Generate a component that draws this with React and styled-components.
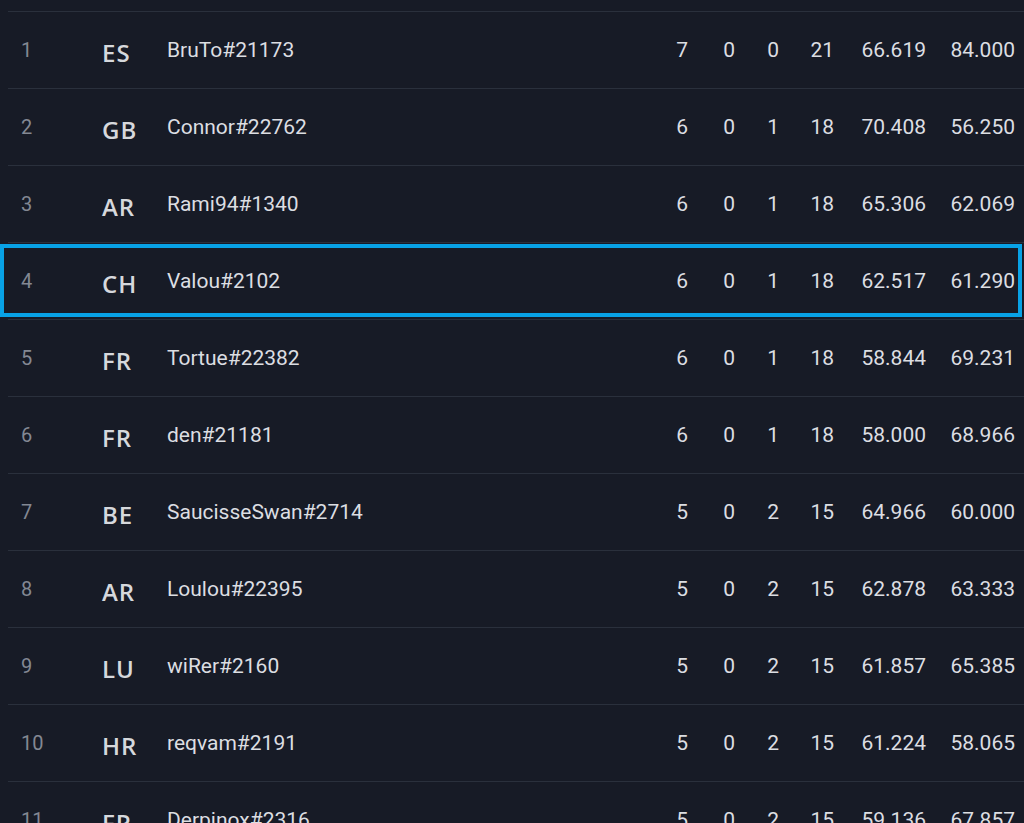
import React from "react";
import styled, { createGlobalStyle } from "styled-components";

const Global = createGlobalStyle`
  html, body { margin: 0; padding: 0; background: #171b26; }
  body { font-family: Roboto, "Liberation Sans", sans-serif; overflow: hidden; }
`;

const Page = styled.div`
  padding: 11px 0 0 8px;
  height: 823px;
  box-sizing: border-box;
  overflow: hidden;
`;

const Table = styled.div`
  display: flex;
  flex-direction: column;
`;

const Row = styled.div`
  position: relative;
  display: grid;
  grid-template-columns: 80px 79px 1fr 50px 47px 44px 55px 92px 89px;
  align-items: center;
  height: 76px;
  border-top: 1px solid #2a303c;
  padding-right: 9px;
  ${(p) =>
    p.$active &&
    `
    &::after {
      content: "";
      position: absolute;
      left: -8px;
      right: 2px;
      top: 1px;
      bottom: 2px;
      border: 4px solid #08a2e6;
      pointer-events: none;
    }
  `}
`;

const Rank = styled.div`
  padding-left: 13px;
  color: #838893;
  font-size: 20px;
`;

const Code = styled.div`
  padding-left: 14px;
  padding-top: 5px;
  font-family: "Open Sans", "Noto Sans", sans-serif;
  font-weight: 600;
  font-size: 24px;
  color: #d6d8dc;
  letter-spacing: 1px;
`;

const Name = styled.div`
  color: #dcdee2;
  font-size: 21px;
`;

const Num = styled.div`
  text-align: right;
  color: #dcdee2;
  font-size: 21px;
`;

const rows = [
  [1, "ES", "BruTo#21173", 7, 0, 0, 21, "66.619", "84.000"],
  [2, "GB", "Connor#22762", 6, 0, 1, 18, "70.408", "56.250"],
  [3, "AR", "Rami94#1340", 6, 0, 1, 18, "65.306", "62.069"],
  [4, "CH", "Valou#2102", 6, 0, 1, 18, "62.517", "61.290"],
  [5, "FR", "Tortue#22382", 6, 0, 1, 18, "58.844", "69.231"],
  [6, "FR", "den#21181", 6, 0, 1, 18, "58.000", "68.966"],
  [7, "BE", "SaucisseSwan#2714", 5, 0, 2, 15, "64.966", "60.000"],
  [8, "AR", "Loulou#22395", 5, 0, 2, 15, "62.878", "63.333"],
  [9, "LU", "wiRer#2160", 5, 0, 2, 15, "61.857", "65.385"],
  [10, "HR", "reqvam#2191", 5, 0, 2, 15, "61.224", "58.065"],
  [11, "FR", "Derpinox#2316", 5, 0, 2, 15, "59.136", "67.857"],
];

export default function App() {
  return (
    <>
      <Global />
      <Page>
        <Table>
          {rows.map((r) => (
            <Row key={r[0]} $active={r[0] === 4}>
              <Rank>{r[0]}</Rank>
              <Code>{r[1]}</Code>
              <Name>{r[2]}</Name>
              {r.slice(3).map((v, i) => (
                <Num key={i}>{v}</Num>
              ))}
            </Row>
          ))}
        </Table>
      </Page>
    </>
  );
}
